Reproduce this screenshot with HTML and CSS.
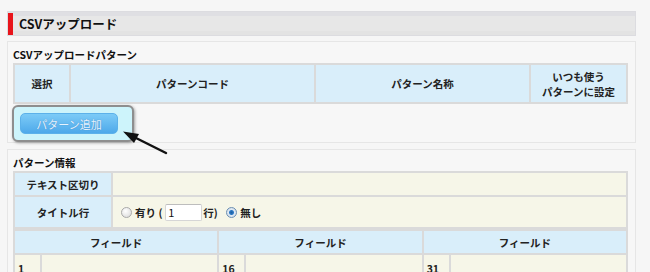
FILE: index.html
```html
<!DOCTYPE html>
<html lang="ja">

<head>
    <meta charset="UTF-8" />
    <meta name="viewport" content="width=device-width, initial-scale=1.0" />
    <title>CSVアップロード</title>
    <link rel="stylesheet" href="styles.css">
</head>

<body>
    <div class="page">
        <div class="title-bar">
            <h1 class="title">CSVアップロード</h1>
        </div>

        <div class="panel panel-pattern">
            <h2 class="panel-label">CSVアップロードパターン</h2>
            <table class="grid pattern-table">
                <tr>
                    <th class="col-select">選択</th>
                    <th class="col-code">パターンコード</th>
                    <th class="col-name">パターン名称</th>
                    <th class="col-default">いつも使う<br>パターンに設定</th>
                </tr>
            </table>
            <div class="highlight">
                <button class="btn-add">パターン追加</button>
            </div>
        </div>

        <div class="panel panel-info">
            <h2 class="panel-label">パターン情報</h2>
            <table class="grid info-table">
                <tr class="row-sep">
                    <th class="info-head">テキスト区切り</th>
                    <td></td>
                </tr>
                <tr class="row-title">
                    <th class="info-head">タイトル行</th>
                    <td>
                        <label class="opt"><span class="radio"></span>有り (</label><input class="line-input" type="text" value="1"><span class="opt-text">行)</span>
                        <label class="opt"><span class="radio checked"></span>無し</label>
                    </td>
                </tr>
            </table>
            <table class="grid field-table">
                <colgroup>
                    <col class="num-col"><col>
                    <col class="num-col"><col>
                    <col class="num-col"><col>
                </colgroup>
                <tr>
                    <th colspan="2">フィールド</th>
                    <th colspan="2">フィールド</th>
                    <th colspan="2">フィールド</th>
                </tr>
                <tr class="field-row">
                    <td class="num">1</td><td></td>
                    <td class="num">16</td><td></td>
                    <td class="num">31</td><td></td>
                </tr>
            </table>
        </div>

        <!-- 説明用の矢印 -->
        <svg class="arrow" width="650" height="272" viewBox="0 0 650 272">
            <line x1="166" y1="153" x2="132" y2="136" stroke="#111" stroke-width="2.5" stroke-linecap="round" />
            <polygon points="123,131.5 139,134 134,143" fill="#111" />
        </svg>
    </div>
</body>

</html>
```

FILE: styles.css
```css
* {
    margin: 0;
    padding: 0;
    box-sizing: border-box;
    font-family: "Noto Sans CJK JP", "Noto Sans", sans-serif;
}

body {
    background: #f6f6f6;
    color: #222;
    font-size: 10.5px;
}

.page {
    position: relative;
    padding: 11px 14px 0 7px;
    height: 272px;
    overflow: hidden;
}

.title-bar {
    height: 25px;
    border: 1px solid #dcdce0;
    padding: 1px 0 0 0;
    background: linear-gradient(#dfdfe3 0, #dfdfe3 4px, #e7e7e7 4px, #e7e7e7 19px, #e3e3e3 19px);
}

.title {
    border-left: 5px solid #e8141b;
    padding-left: 6px;
    font-size: 12.5px;
    font-weight: bold;
    line-height: 22px;
    height: 22px;
    color: #111;
}

.panel {
    background: #f7f7f7;
    border: 1px solid #e6e6e6;
    padding: 0 7px 0 5px;
}

.panel-pattern {
    margin-top: 5px;
}

.panel-info {
    margin-top: 6px;
    height: 200px;
}

.panel-label {
    font-size: 10.5px;
    font-weight: bold;
    padding-top: 5px;
    line-height: 16px;
    color: #111;
}

.grid {
    width: 100%;
    background: #dadada;
    border-spacing: 2px;
    table-layout: fixed;
}

.grid th {
    background: #d9eefa;
    font-weight: bold;
    text-align: center;
    color: #222;
}

.grid td {
    background: #f6f6e8;
}

.pattern-table th {
    height: 37px;
    line-height: 15px;
}

.col-select {
    width: 54px;
}

.col-code {
    width: 243px;
}

.col-name {
    width: 213px;
}

.highlight {
    display: inline-block;
    margin: 1px 0 0 -1px;
    padding: 6px 14px 6px 6px;
    background: #cdf4fb;
    border: 2px solid #8e8e8e;
    border-radius: 6px;
    box-shadow: 1px 1px 3px rgba(0, 0, 0, 0.35);
}

.btn-add {
    display: block;
    width: 98px;
    height: 21px;
    border: 1px solid #5cb1ea;
    border-radius: 5px;
    background: linear-gradient(#7ccbf7, #4ea9ea);
    color: #e6f3ff;
    font-size: 11px;
    text-shadow: 0 0 1px rgba(40, 100, 160, 0.6);
}

.info-head {
    width: 96px;
}

.row-sep th,
.row-sep td {
    height: 22px;
}

.row-title th,
.row-title td {
    height: 30px;
}

.row-title td {
    padding-left: 8px;
    font-weight: bold;
    white-space: nowrap;
}

.opt {
    display: inline-flex;
    align-items: center;
    gap: 3px;
    vertical-align: middle;
}

.radio {
    display: inline-block;
    width: 11px;
    height: 11px;
    border-radius: 50%;
    border: 1px solid #a9a9a9;
    background: radial-gradient(circle at 40% 35%, #ffffff, #d6d6d6);
}

.radio.checked {
    border-color: #6c8fb3;
    background: radial-gradient(circle, #1d5fa3 0, #2c79c4 2px, #dfe9f3 3px, #c9d6e3 100%);
}

.line-input {
    width: 37px;
    height: 17px;
    margin: 0 1px 0 3px;
    border: 1px solid #d6d6d6;
    border-top-color: #bdbdbd;
    border-radius: 2px;
    background: #fff;
    padding: 0 2px;
    font-size: 11px;
    color: #111;
    vertical-align: middle;
}

.opt-text {
    vertical-align: middle;
    margin-right: 6px;
}

.field-table th {
    height: 22px;
}

.num-col {
    width: 25px;
}

.field-row td {
    height: 40px;
    vertical-align: top;
    padding: 6px 0 0 3px;
    font-weight: bold;
    line-height: 16px;
}

.arrow {
    position: absolute;
    left: 0;
    top: 0;
    pointer-events: none;
}
```
